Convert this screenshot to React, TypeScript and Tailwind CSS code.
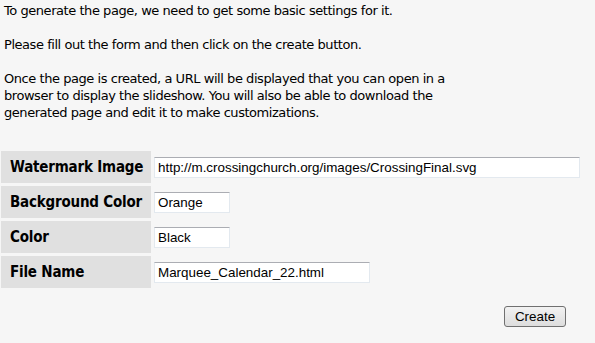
export default function App() {
  const rows = [
    { label: 'Watermark Image', value: 'http://m.crossingchurch.org/images/CrossingFinal.svg', width: 'w-[426px]' },
    { label: 'Background Color', value: 'Orange', width: 'w-[76px]' },
    { label: 'Color', value: 'Black', width: 'w-[76px]' },
    { label: 'File Name', value: 'Marquee_Calendar_22.html', width: 'w-[216px]' },
  ];

  return (
    <div className="min-h-[343px] w-[595px] bg-[#f6f6f6] text-black">
      <div className="px-[4px] pt-[2px] text-[13px] leading-[17px] font-['DejaVu_Sans',sans-serif] tracking-[-0.45px] whitespace-nowrap">
        <p>To generate the page, we need to get some basic settings for it.</p>
        <p className="mt-[17px]">Please fill out the form and then click on the create button.</p>
        <p className="mt-[17px]">
          Once the page is created, a URL will be displayed that you can open in a
          <br />
          browser to display the slideshow. You will also be able to download the
          <br />
          generated page and edit it to make customizations.
        </p>
      </div>

      <div className="mt-[30px] ml-px flex flex-col gap-[3px]">
        {rows.map((row) => (
          <div key={row.label} className="flex h-[32px] items-center gap-[3px]">
            <div className="flex h-full w-[150px] items-center whitespace-nowrap bg-[#e0e0e0] pl-[9px] text-[15px] font-bold font-['DejaVu_Sans_Condensed','DejaVu_Sans',sans-serif] tracking-[-0.2px]">
              {row.label}
            </div>
            <input
              readOnly
              value={row.value}
              className={`${row.width} h-[21px] border border-[#e3e9ef] border-t-[#abadb3] bg-white px-[3px] text-[13.4px] font-['Liberation_Sans',sans-serif] outline-none`}
            />
          </div>
        ))}
      </div>

      <div className="mt-[18px] flex justify-end pr-[29px]">
        <button className="h-[21px] w-[62px] rounded-[3px] border border-[#707070] bg-gradient-to-b from-[#f2f2f2] to-[#dddddd] text-[13.4px] font-['Liberation_Sans',sans-serif]">
          Create
        </button>
      </div>
    </div>
  );
}
